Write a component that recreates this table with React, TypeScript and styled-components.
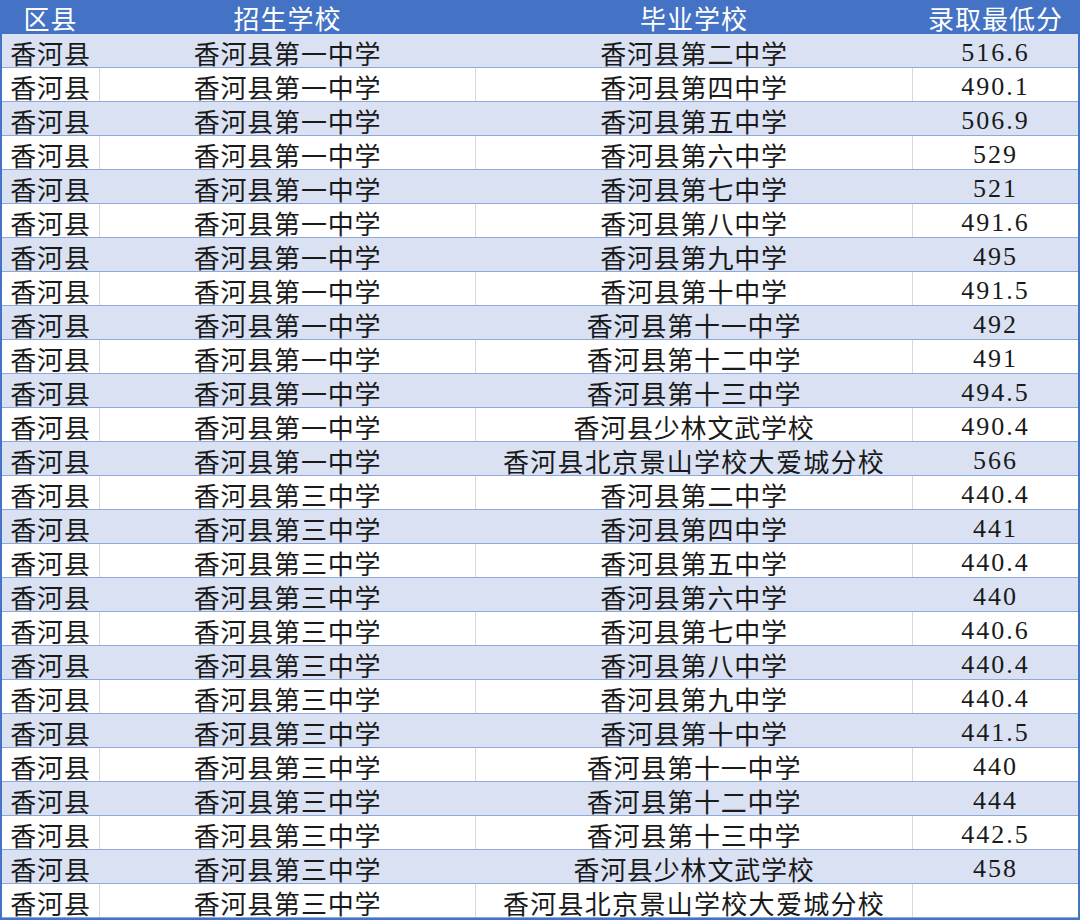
import styled, { createGlobalStyle } from "styled-components";

const COLORS = {
  header: "#4472c4",
  band: "#d9e1f2",
  line: "#8ea9db",
  grid: "#d9d9d9",
  text: "#1a1a1a",
};

const GlobalStyle = createGlobalStyle`
  html, body {
    margin: 0;
    padding: 0;
    background: #ffffff;
  }
`;

const Sheet = styled.div`
  width: 1080px;
  height: 920px;
  box-sizing: border-box;
  border-left: 2px solid ${COLORS.header};
  border-right: 2px solid ${COLORS.header};
  border-bottom: 2px solid ${COLORS.header};
  overflow: hidden;
  font-family: "Noto Sans CJK SC", "Noto Sans", sans-serif;
  color: ${COLORS.text};
`;

const Row = styled.div<{ $kind: "head" | "band" | "plain" }>`
  display: grid;
  grid-template-columns: 98px 376px 437px 1fr;
  height: 34px;
  box-sizing: border-box;
  border-bottom: 1px solid
    ${(p) => (p.$kind === "head" ? COLORS.header : COLORS.line)};
  background: ${(p) =>
    p.$kind === "head" ? COLORS.header : p.$kind === "band" ? COLORS.band : "#ffffff"};
  color: ${(p) => (p.$kind === "head" ? "#ffffff" : COLORS.text)};

  & > *:not(:last-child) {
    border-right: 1px solid
      ${(p) => (p.$kind === "plain" ? COLORS.grid : "transparent")};
  }
`;

const Cell = styled.div<{ $wide?: boolean; $num?: boolean }>`
  display: flex;
  align-items: center;
  justify-content: center;
  height: 33px;
  box-sizing: border-box;
  font-size: 26px;
  font-family: ${(p) =>
    p.$num
      ? `"Liberation Serif", "Noto Sans CJK SC", serif`
      : `"Noto Sans CJK SC", sans-serif`};
  letter-spacing: ${(p) => (p.$wide ? "1.3px" : p.$num ? "2px" : "0.8px")};
  line-height: 29px;
  white-space: nowrap;
  padding-top: 4px;
`;

const HeadCell = styled(Cell)`
  padding-top: 2px;
  line-height: 31px;
  letter-spacing: 1px;
`;

const grads = [
  ["香河县第二中学", "516.6"],
  ["香河县第四中学", "490.1"],
  ["香河县第五中学", "506.9"],
  ["香河县第六中学", "529"],
  ["香河县第七中学", "521"],
  ["香河县第八中学", "491.6"],
  ["香河县第九中学", "495"],
  ["香河县第十中学", "491.5"],
  ["香河县第十一中学", "492"],
  ["香河县第十二中学", "491"],
  ["香河县第十三中学", "494.5"],
  ["香河县少林文武学校", "490.4"],
  ["香河县北京景山学校大爱城分校", "566"],
];

const grads3 = [
  ["香河县第二中学", "440.4"],
  ["香河县第四中学", "441"],
  ["香河县第五中学", "440.4"],
  ["香河县第六中学", "440"],
  ["香河县第七中学", "440.6"],
  ["香河县第八中学", "440.4"],
  ["香河县第九中学", "440.4"],
  ["香河县第十中学", "441.5"],
  ["香河县第十一中学", "440"],
  ["香河县第十二中学", "444"],
  ["香河县第十三中学", "442.5"],
  ["香河县少林文武学校", "458"],
  ["香河县北京景山学校大爱城分校", ""],
];

const rows = [
  ...grads.map(([from, score]) => ({ school: "香河县第一中学", from, score })),
  ...grads3.map(([from, score]) => ({ school: "香河县第三中学", from, score })),
];

const App = () => {
  return (
    <>
      <GlobalStyle />
      <Sheet>
        <Row $kind="head">
          <HeadCell>区县</HeadCell>
          <HeadCell>招生学校</HeadCell>
          <HeadCell>毕业学校</HeadCell>
          <HeadCell>录取最低分</HeadCell>
        </Row>
        {rows.map((r, i) => (
          <Row key={i} $kind={i % 2 === 0 ? "band" : "plain"}>
            <Cell>香河县</Cell>
            <Cell>{r.school}</Cell>
            <Cell $wide={r.from.length > 10}>{r.from}</Cell>
            <Cell $num>{r.score}</Cell>
          </Row>
        ))}
      </Sheet>
    </>
  );
};

export default App;
